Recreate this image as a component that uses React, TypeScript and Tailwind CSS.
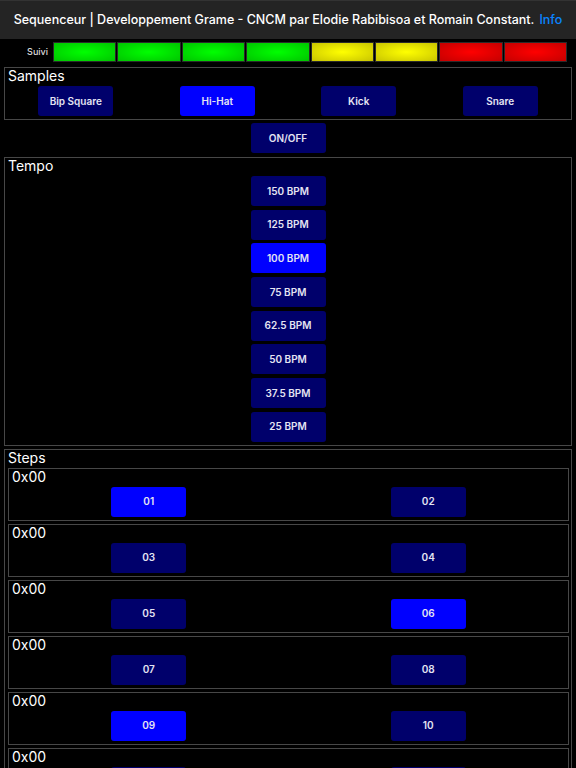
import React from "react";

const SAMPLES = ["Bip Square", "Hi-Hat", "Kick", "Snare"];
const TEMPOS = ["150 BPM", "125 BPM", "100 BPM", "75 BPM", "62.5 BPM", "50 BPM", "37.5 BPM", "25 BPM"];
const ACTIVE_STEPS = [1, 6, 9];

const METER = [
  "bg-[radial-gradient(ellipse_at_center,#00ff00_0%,#00c400_100%)]",
  "bg-[radial-gradient(ellipse_at_center,#00ff00_0%,#00c400_100%)]",
  "bg-[radial-gradient(ellipse_at_center,#00ff00_0%,#00c400_100%)]",
  "bg-[radial-gradient(ellipse_at_center,#00ff00_0%,#00c400_100%)]",
  "bg-[radial-gradient(ellipse_at_center,#ffff00_0%,#c8c400_100%)]",
  "bg-[radial-gradient(ellipse_at_center,#ffff00_0%,#c8c400_100%)]",
  "bg-[radial-gradient(ellipse_at_center,#ff0000_0%,#c40000_100%)]",
  "bg-[radial-gradient(ellipse_at_center,#ff0000_0%,#c40000_100%)]",
];

function Pad({ label, active }: { label: string; active?: boolean }) {
  return (
    <button
      className={`w-[75px] h-[30px] rounded-[3px] mx-auto flex items-center justify-center text-[10px] font-semibold text-[#e4e4f2] ${
        active ? "bg-[#0000ff]" : "bg-[#00006b]"
      }`}
    >
      {label}
    </button>
  );
}

function Group({ title, children, className = "" }: { title: string; children: React.ReactNode; className?: string }) {
  return (
    <div className={`border border-[#474747] pb-[3px] ${className}`}>
      <div className="h-[18px] pl-[3px] text-[14px] leading-[15px] text-white">{title}</div>
      {children}
    </div>
  );
}

export default function App() {
  const rows = Array.from({ length: 8 }, (_, i) => [i * 2 + 1, i * 2 + 2]);

  return (
    <div className="min-h-screen bg-black font-['Inter',sans-serif] text-white">
      <div className="h-[39px] bg-[#242424] border-t border-[#333] flex items-center justify-center whitespace-nowrap text-[12.5px] font-medium">
        <span>Sequenceur | Developpement Grame - CNCM par Elodie Rabibisoa et Romain Constant.</span>
        <span className="ml-[5px] text-[#0a84ff]">Info</span>
      </div>

      <div className="h-[28px] flex items-start pt-[3px] pr-[9px]">
        <div className="w-[53px] h-[20px] pr-[5px] flex items-center justify-end text-[9px] font-medium text-[#ddd]">Suivi</div>
        <div className="flex-1 flex gap-[1px]">
          {METER.map((bg, i) => (
            <div key={i} className={`flex-1 h-[20px] border border-[#2a2a2a] ${bg}`} />
          ))}
        </div>
      </div>

      <div className="mx-[4px] flex flex-col">
        <Group title="Samples">
          <div className="grid grid-cols-4">
            {SAMPLES.map((s) => (
              <Pad key={s} label={s} active={s === "Hi-Hat"} />
            ))}
          </div>
        </Group>

        <div className="mt-[3px] mb-[4px]">
          <Pad label="ON/OFF" />
        </div>

        <Group title="Tempo">
          <div className="flex flex-col gap-[3.7px]">
            {TEMPOS.map((t) => (
              <Pad key={t} label={t} active={t === "100 BPM"} />
            ))}
          </div>
        </Group>

        <Group title="Steps" className="mt-[3px]">
          <div className="pl-[3px] pr-[2px] flex flex-col gap-[3px]">
            {rows.map((pair, i) => (
              <div key={i} className="border border-[#474747] pb-[3px]">
                <div className="h-[18px] pl-[3px] text-[14px] leading-[15px] text-white">0x00</div>
                <div className="grid grid-cols-2">
                  {pair.map((n) => (
                    <Pad key={n} label={String(n).padStart(2, "0")} active={ACTIVE_STEPS.includes(n)} />
                  ))}
                </div>
              </div>
            ))}
          </div>
        </Group>
      </div>
    </div>
  );
}
